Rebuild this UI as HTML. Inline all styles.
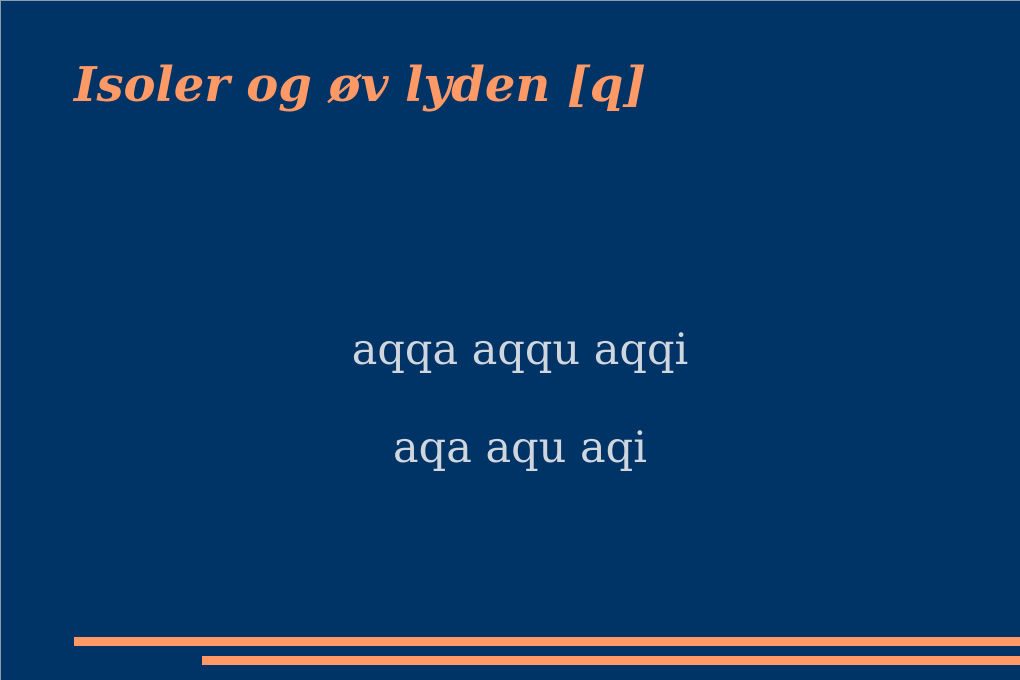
<!DOCTYPE html>
<html><head><meta charset="utf-8"><style>
html,body{margin:0;padding:0}
body{width:1020px;height:680px;background:#003366;position:relative;overflow:hidden;box-shadow:inset 1px 1px 0 #8a9bb0}
.t{position:absolute;left:74px;top:57px;font-family:"DejaVu Serif",serif;font-weight:bold;font-style:italic;font-size:48px;color:#ff9966;white-space:nowrap}
.b{position:absolute;left:10px;width:1020px;text-align:center;font-family:"DejaVu Serif",serif;font-size:43px;color:#d0d6de;white-space:nowrap}
.bar{position:absolute;background:#ff9966;height:9px;right:0}
</style></head><body>
<div class="t">Isoler og øv lyden [q]</div>
<div class="b" style="top:325px">aqqa aqqu aqqi</div>
<div class="b" style="top:423px">aqa aqu aqi</div>
<div class="bar" style="left:74px;top:637px"></div>
<div class="bar" style="left:202px;top:656px"></div>
</body></html>
